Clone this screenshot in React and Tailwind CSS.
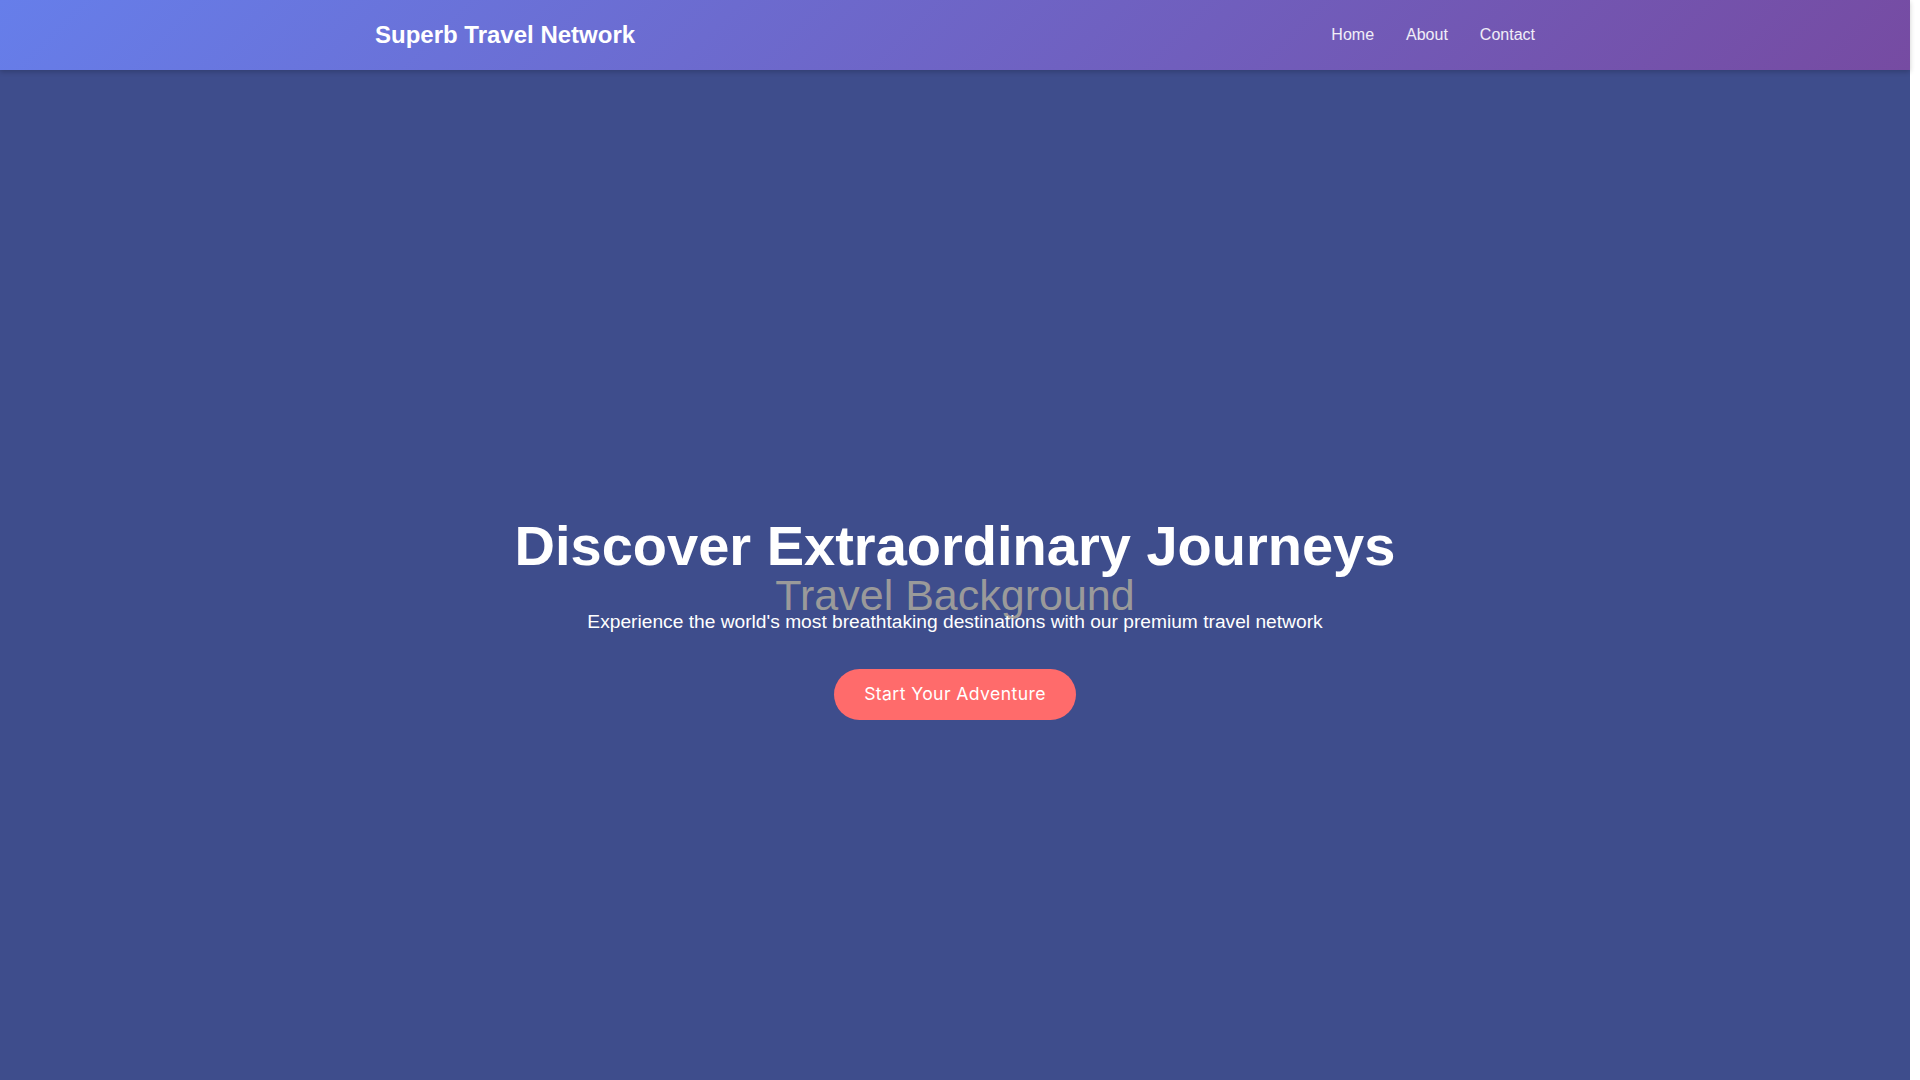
import React from "react";

const destinations = [
  { name: "Santorini, Greece", text: "Whitewashed villages perched above the deep blue Aegean." },
  { name: "Kyoto, Japan", text: "Ancient temples, quiet gardens and seasonal colours." },
  { name: "Banff, Canada", text: "Turquoise lakes framed by the Canadian Rockies." },
  { name: "Marrakech, Morocco", text: "Vibrant souks, spice markets and desert sunsets." },
  { name: "Reykjavik, Iceland", text: "Northern lights, glaciers and geothermal lagoons." },
  { name: "Cape Town, South Africa", text: "Where mountains meet two oceans." },
];

const features = [
  { title: "Curated Trips", text: "Every itinerary is hand-picked by our travel experts." },
  { title: "24/7 Support", text: "We are with you on every step of your journey." },
  { title: "Best Prices", text: "Premium experiences without the premium markup." },
];

export default function App() {
  return (
    <div className="mr-[10px] font-['Liberation_Sans',Arial,sans-serif] text-[#333]">
      {/* Header */}
      <header className="relative z-10 bg-[linear-gradient(135deg,#667eea_0%,#764ba2_100%)] shadow-[0_2px_5px_rgba(0,0,0,0.2)]">
        <div className="max-w-[1200px] mx-auto px-5 py-5 flex items-center justify-between">
          <div className="text-2xl leading-[30px] font-bold text-white">
            Superb Travel Network
          </div>
          <nav className="flex items-center gap-8">
            {["Home", "About", "Contact"].map((item) => (
              <a key={item} href="#" className="text-base text-white/90 hover:text-white">
                {item}
              </a>
            ))}
          </nav>
        </div>
      </header>

      {/* Hero */}
      <section className="relative h-[1080px] bg-[#3e4d8c] flex items-center justify-center text-center">
        <span className="absolute left-1/2 top-[calc(50%-15px)] -translate-x-1/2 -translate-y-1/2 text-[43px] leading-[50px] text-[#9a9a9a] whitespace-nowrap">
          Travel Background
        </span>
        <div className="relative pt-[12px] flex flex-col items-center">
          <h1 className="text-[56px] leading-[67px] font-bold text-white mb-[27px]">
            Discover Extraordinary Journeys
          </h1>
          <p className="text-[19.2px] leading-[31px] text-white mb-[32px]">
            Experience the world's most breathtaking destinations with our premium travel network
          </p>
          <button className="h-[51px] px-[30px] rounded-full bg-[#ff6b6b] text-white text-[17.6px] tracking-[0.4px] font-normal font-['Inter',sans-serif] hover:bg-[#ff5252]">
            Start Your Adventure
          </button>
        </div>
      </section>

      {/* Destinations */}
      <section className="bg-white py-24">
        <div className="max-w-[1200px] mx-auto px-5">
          <h2 className="text-4xl font-bold text-center mb-4">Popular Destinations</h2>
          <p className="text-center text-lg text-gray-500 mb-16">
            Handpicked places our travellers love the most
          </p>
          <div className="grid grid-cols-3 gap-8">
            {destinations.map((d) => (
              <div key={d.name} className="rounded-xl overflow-hidden shadow-[0_5px_20px_rgba(0,0,0,0.1)]">
                <div className="h-[260px] bg-[linear-gradient(135deg,#667eea_0%,#764ba2_100%)]" />
                <div className="p-6">
                  <h3 className="text-xl font-bold mb-2">{d.name}</h3>
                  <p className="text-gray-500">{d.text}</p>
                </div>
              </div>
            ))}
          </div>
        </div>
      </section>

      {/* Features */}
      <section className="bg-[#f8f9fa] py-24">
        <div className="max-w-[1200px] mx-auto px-5">
          <h2 className="text-4xl font-bold text-center mb-16">Why Travel With Us</h2>
          <div className="grid grid-cols-3 gap-8">
            {features.map((f) => (
              <div key={f.title} className="bg-white rounded-xl p-10 text-center h-[300px]">
                <div className="w-16 h-16 mx-auto mb-6 rounded-full bg-[#ff6b6b]" />
                <h3 className="text-xl font-bold mb-3">{f.title}</h3>
                <p className="text-gray-500">{f.text}</p>
              </div>
            ))}
          </div>
        </div>
      </section>

      {/* Newsletter */}
      <section className="bg-[linear-gradient(135deg,#667eea_0%,#764ba2_100%)] py-24 text-center text-white">
        <h2 className="text-4xl font-bold mb-4">Ready for Your Next Adventure?</h2>
        <p className="text-lg mb-8">Subscribe to get exclusive offers and travel inspiration.</p>
        <button className="px-8 py-3 rounded-full bg-[#ff6b6b] text-white">Subscribe</button>
      </section>

      {/* Footer */}
      <footer className="bg-[#2c3e50] text-white/80 py-16">
        <div className="max-w-[1200px] mx-auto px-5 grid grid-cols-3 gap-8 mb-12">
          <div>
            <h4 className="text-lg font-bold text-white mb-4">Superb Travel Network</h4>
            <p>Your gateway to the world's most breathtaking destinations.</p>
          </div>
          <div>
            <h4 className="text-lg font-bold text-white mb-4">Explore</h4>
            <ul className="space-y-2">
              <li>Destinations</li>
              <li>Tours</li>
              <li>Travel Guides</li>
            </ul>
          </div>
          <div>
            <h4 className="text-lg font-bold text-white mb-4">Contact</h4>
            <ul className="space-y-2">
              <li>info@superbtravel.com</li>
              <li>+1 (555) 123-4567</li>
            </ul>
          </div>
        </div>
        <p className="text-center text-sm border-t border-white/10 pt-8">
          &copy; 2024 Superb Travel Network. All rights reserved.
        </p>
      </footer>
    </div>
  );
}
